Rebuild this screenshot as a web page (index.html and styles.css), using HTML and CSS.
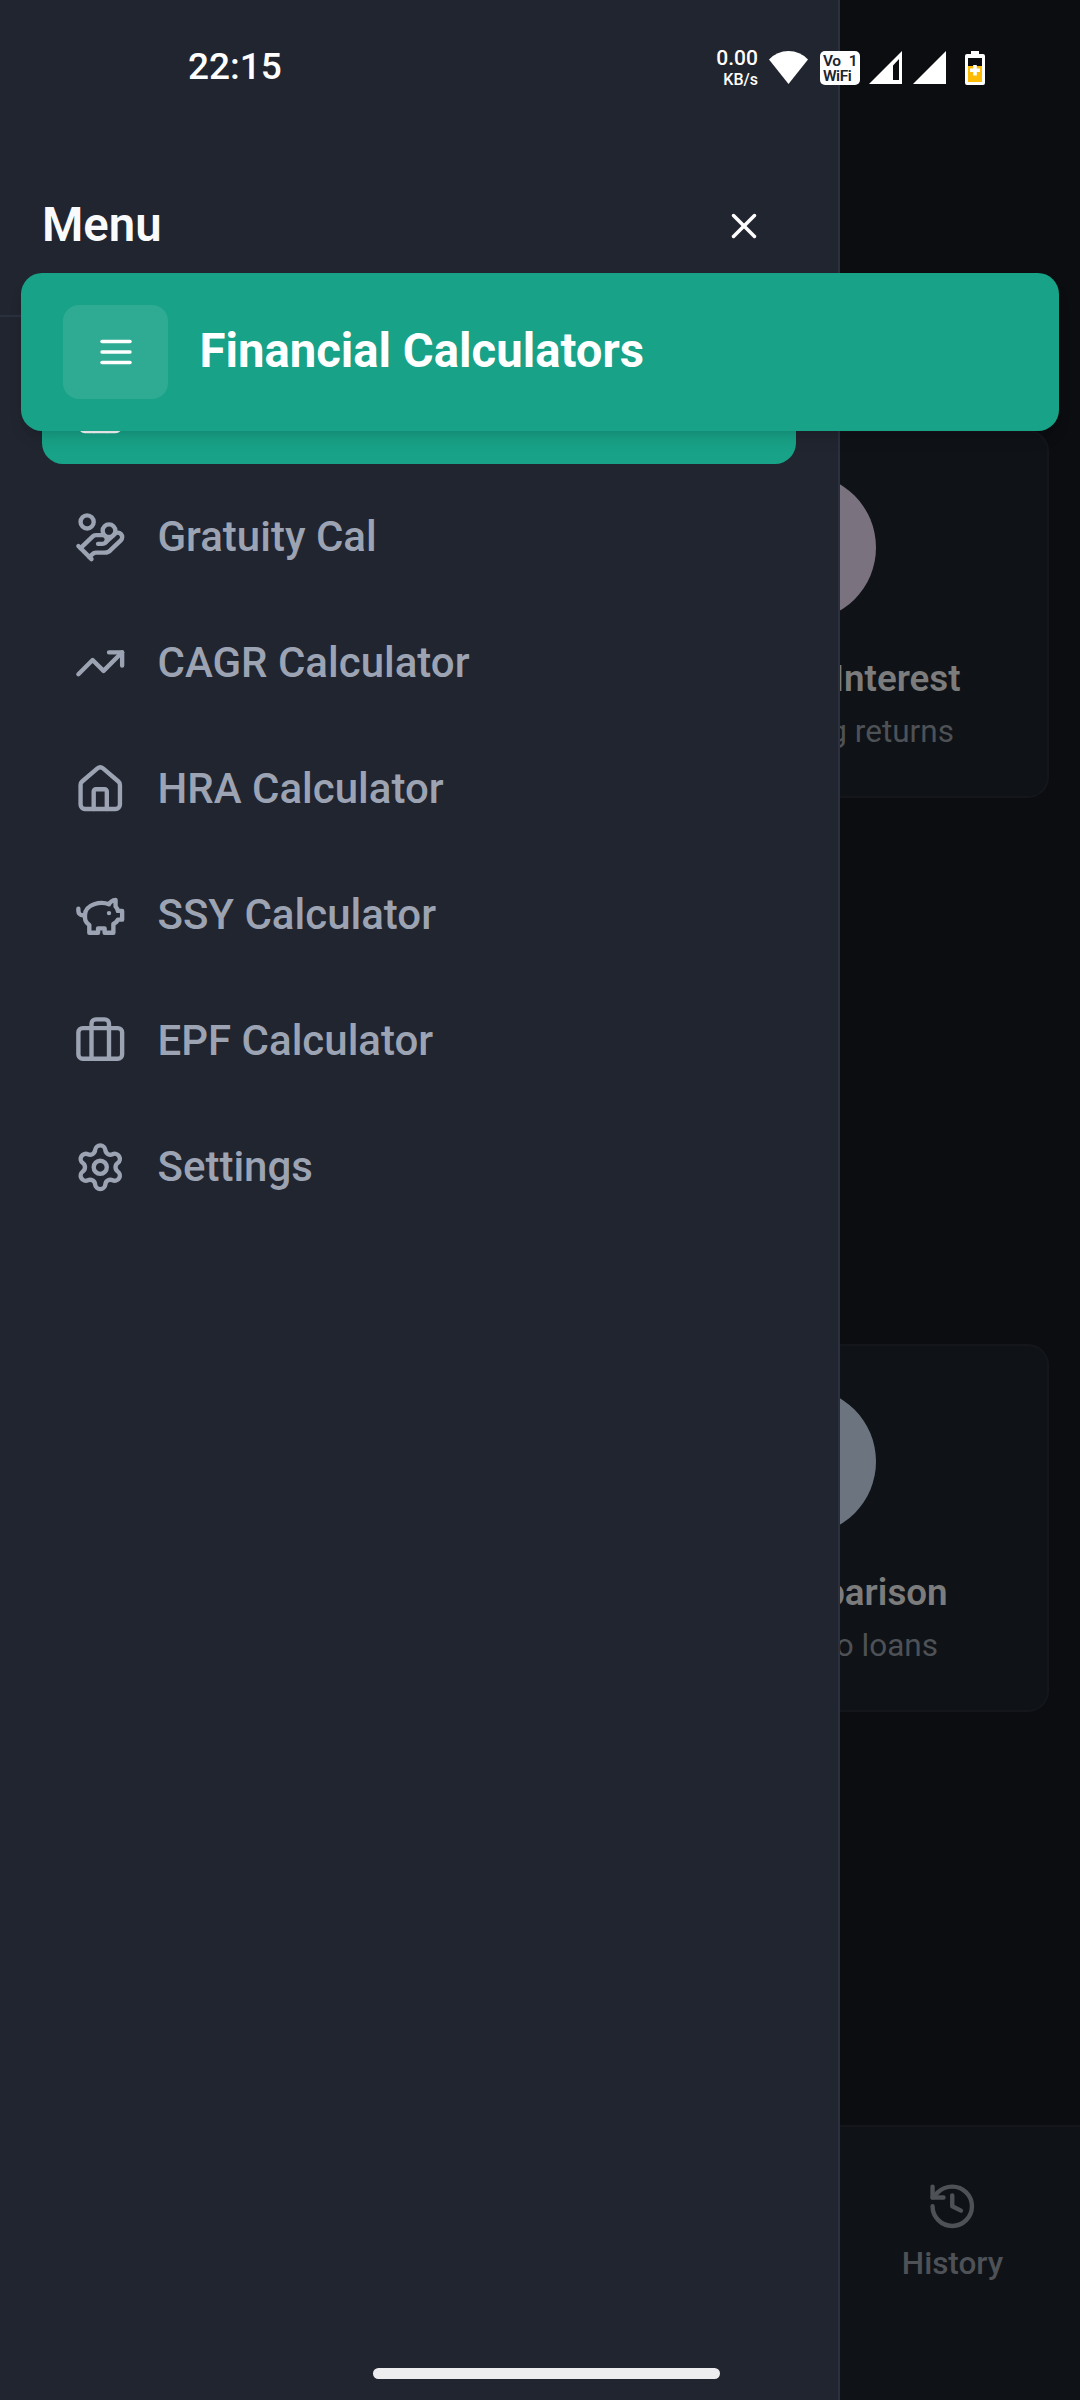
FILE: index.html
```html
<!DOCTYPE html>
<html lang="en">
<head>
<meta charset="UTF-8">
<title>Financial Calculators</title>
<meta name="viewport" content="width=device-width,initial-scale=1">
<link rel="stylesheet" href="styles.css">
</head>
<body>

<div id="app">
  <!-- Page behind the drawer -->
  <main class="cards">
    <div class="card">
      <div class="circle pink"></div>
      <h3>Compound Interest</h3>
      <p>Compounding returns</p>
    </div>
    <div class="card">
      <div class="circle blue"></div>
      <h3>Loan Comparison</h3>
      <p>Compare two loans</p>
    </div>
  </main>

  <footer class="tabs">
    <div class="tab">
      <svg class="icon" viewBox="0 0 24 24"><path d="M3 12a9 9 0 1 0 9-9 9.75 9.75 0 0 0-6.74 2.74L3 8"/><path d="M3 3v5h5"/><path d="M12 7v5l4 2"/></svg>
      <span>History</span>
    </div>
  </footer>

  <!-- Drawer -->
  <aside class="drawer">
    <div class="drawer-head">
      <h2>Menu</h2>
      <svg class="icon small" viewBox="0 0 24 24"><path d="M18 6 6 18"/><path d="m6 6 12 12"/></svg>
    </div>
    <nav>
      <div class="item active">
        <svg class="icon" viewBox="0 0 24 24"><path d="M15 21v-8a1 1 0 0 0-1-1h-4a1 1 0 0 0-1 1v8"/><path d="M3 10a2 2 0 0 1 .709-1.528l7-5.999a2 2 0 0 1 2.582 0l7 5.999A2 2 0 0 1 21 10v9a2 2 0 0 1-2 2H5a2 2 0 0 1-2-2z"/></svg>
      </div>
      <div class="item">
        <svg class="icon" viewBox="0 0 24 24"><path d="M11 15h2a2 2 0 1 0 0-4h-3c-.6 0-1.1.2-1.4.6L3 17"/><path d="m7 21 1.6-1.4c.3-.4.8-.6 1.4-.6h4c1.1 0 2.1-.4 2.8-1.2l4.6-4.4a2 2 0 0 0-2.75-2.91l-4.2 3.9"/><path d="m2 16 6 6"/><circle cx="16" cy="9" r="2.9"/><circle cx="6" cy="5" r="3"/></svg>
        <span>Gratuity Cal</span>
      </div>
      <div class="item">
        <svg class="icon" viewBox="0 0 24 24"><path d="M16 7h6v6"/><path d="m22 7-8.5 8.5-5-5L2 17"/></svg>
        <span>CAGR Calculator</span>
      </div>
      <div class="item">
        <svg class="icon" viewBox="0 0 24 24"><path d="M15 21v-8a1 1 0 0 0-1-1h-4a1 1 0 0 0-1 1v8"/><path d="M3 10a2 2 0 0 1 .709-1.528l7-5.999a2 2 0 0 1 2.582 0l7 5.999A2 2 0 0 1 21 10v9a2 2 0 0 1-2 2H5a2 2 0 0 1-2-2z"/></svg>
        <span>HRA Calculator</span>
      </div>
      <div class="item">
        <svg class="icon" viewBox="0 0 24 24"><path d="M19 5c-1.5 0-2.8 1.4-3 2-3.5-1.5-11-.3-11 5 0 1.8 0 3 2 4.5V20h4v-2h3v2h4v-4c1-.5 1.7-1 2-2h2v-4h-2c0-1-.5-1.5-1-2V5z"/><path d="M2 9v1c0 1.1.9 2 2 2h1"/><path d="M16 11h.01"/></svg>
        <span>SSY Calculator</span>
      </div>
      <div class="item">
        <svg class="icon" viewBox="0 0 24 24"><path d="M16 20V4a2 2 0 0 0-2-2h-4a2 2 0 0 0-2 2v16"/><rect x="2" y="6" width="20" height="14" rx="2"/></svg>
        <span>EPF Calculator</span>
      </div>
      <div class="item">
        <svg class="icon" viewBox="0 0 24 24"><path d="M9.671 4.136a2.34 2.34 0 0 1 4.659 0 2.34 2.34 0 0 0 3.319 1.915 2.34 2.34 0 0 1 2.33 4.033 2.34 2.34 0 0 0 0 3.831 2.34 2.34 0 0 1-2.33 4.033 2.34 2.34 0 0 0-3.319 1.915 2.34 2.34 0 0 1-4.659 0 2.34 2.34 0 0 0-3.32-1.915 2.34 2.34 0 0 1-2.33-4.033 2.34 2.34 0 0 0 0-3.831A2.34 2.34 0 0 1 6.35 6.051a2.34 2.34 0 0 0 3.319-1.915"/><circle cx="12" cy="12" r="3"/></svg>
        <span>Settings</span>
      </div>
    </nav>
  </aside>

  <!-- App header, floats over the drawer -->
  <header class="topbar">
    <div class="menu-btn">
      <svg class="icon small" viewBox="0 0 24 24"><path d="M4 6h16"/><path d="M4 12h16"/><path d="M4 18h16"/></svg>
    </div>
    <h1>Financial Calculators</h1>
  </header>

  <!-- Phone status bar -->
  <div class="status">
    <span class="clock">22:15</span>
    <div class="status-icons">
      <div class="speed"><b>0.00</b><small>KB/s</small></div>
      <svg class="wifi" width="39" height="33" viewBox="0 0 39 33"><path d="M0 8.500Q8 0 19.500 0T39 8.500L19.500 33z"/></svg>
      <div class="vowifi"><div><span>Vo</span><span>1</span></div><div>WiFi</div></div>
      <svg class="signal" width="33" height="33" viewBox="0 0 33 33"><path fill-rule="evenodd" d="M33 0v33H0zM30 8l-6 6.500V29h6z"/></svg>
      <svg class="signal two" width="33" height="33" viewBox="0 0 33 33"><path d="M33 0v33H0z"/></svg>
      <svg class="battery" width="20" height="34" viewBox="0 0 20 34"><path d="M6 0h8v3h4a2 2 0 0 1 2 2v27a2 2 0 0 1-2 2H2a2 2 0 0 1-2-2V5a2 2 0 0 1 2-2h4z"/><path fill="#0c0d11" d="M3 7h14v8H3z"/><path fill="#fdbb05" d="M3 15h14v16H3z"/><path d="M8.200 14h3.600v3.400H15V21h-3.200v3.400H8.200V21H5v-3.600h3.200z"/></svg>
    </div>
  </div>

  <div class="home-bar"></div>
</div>

</body>
</html>
```

FILE: styles.css
```css
:root{
  --bg:#0c0d11;
  --card:#0f1317;
  --card-line:#14161c;
  --drawer:#21252f;
  --line:#2a303e;
  --accent:#18a287;
  --muted:#9ca3b3;
  --radius:21px;
}
*{box-sizing:border-box;}
body{margin:0; font-family:Roboto,"Liberation Sans",sans-serif; background:var(--bg); color:#fff;}
h1,h2,h3,p{margin:0;}
#app{position:relative; width:1080px; height:2400px; overflow:hidden;}

.icon{
  width:52.5px; height:52.5px; flex:none; fill:none;
  stroke:currentColor; stroke-width:2; stroke-linecap:round; stroke-linejoin:round;
}
.icon.small{width:42px; height:42px;}

/* ---------- page behind ---------- */
.cards{
  display:flex; flex-direction:column; align-items:flex-end; gap:546px;
  padding:430px 31.5px 0 0;
}
.card{
  width:495px; height:368px; padding:42px 0 0 2px;
  background:var(--card); border:2px solid var(--card-line); border-radius:var(--radius);
  display:flex; flex-direction:column; align-items:center;
}
.circle{width:147px; height:147px; border-radius:50%;}
.pink{background:#7a727f;}
.blue{background:#6c747f;}
.card h3{margin-top:32px; padding-left:1px; font-size:36.75px; line-height:52px; font-weight:600; color:#7c7c7d; white-space:nowrap;}
.card p{margin-top:6px; font-size:31.5px; line-height:42px; color:#4e5156; white-space:nowrap;}

.tabs{
  position:absolute; left:0; right:0; bottom:0; height:275px;
  display:flex; justify-content:flex-end;
  background:var(--card); border-top:2px solid var(--card-line);
}
.tab{
  width:255px; padding-top:53px; color:#4e5156;
  display:flex; flex-direction:column; align-items:center; gap:10px;
  font-size:31.5px; line-height:42px; font-weight:500;
}

/* ---------- drawer ---------- */
.drawer{
  position:absolute; left:0; top:0; width:840px; height:2400px;
  background:var(--drawer); border-right:2px solid var(--line);
}
.drawer-head{
  height:317px; padding:137px 73px 0 42px;
  display:flex; align-items:center; justify-content:space-between;
  border-bottom:2px solid var(--line);
}
.drawer-head h2{padding-bottom:2px; font-size:47.25px; font-weight:600; color:#f9fafb;}
nav{display:flex; flex-direction:column; gap:21px; padding:42px;}
.item{
  height:105px; padding:0 31.5px; border-radius:var(--radius);
  display:flex; align-items:center; gap:31.5px;
  font-size:42px; font-weight:500; color:var(--muted);
}
.item span{padding-bottom:2px;}
.item.active{background:var(--accent); color:#fff;}

/* ---------- header ---------- */
.topbar{
  position:absolute; left:21px; top:273px; width:1038px; height:158px;
  display:flex; align-items:center; gap:31.5px; padding:0 42px;
  background:var(--accent); border-radius:var(--radius);
  box-shadow:0 10px 16px -3px rgba(0,0,0,.1), 0 5px 10px -5px rgba(0,0,0,.1);
}
.menu-btn{
  width:105px; height:94px; border-radius:16px; background:rgba(255,255,255,.1);
  display:flex; align-items:center; justify-content:center;
}
.topbar h1{padding-bottom:2px; font-size:47.25px; font-weight:700;}

/* ---------- system bars ---------- */
.status{
  position:absolute; left:0; top:0; width:1080px; height:135px;
  display:flex; justify-content:space-between; padding:0 95px 0 188px;
}
.clock{font-size:37px; line-height:44px; font-weight:500; padding-top:45px;}
.status-icons{display:flex; align-items:flex-start; padding-top:51px;}
.status-icons svg{fill:#fff;}
.speed{display:flex; flex-direction:column; align-items:flex-end; margin:-4px 11px 0 0;}
.speed b{font-size:21px; line-height:23px; font-weight:500;}
.speed small{font-size:16px; line-height:19px; font-weight:500;}
.vowifi{
  width:40px; height:34px; margin:0 9px 0 12px; padding:3px 3px 1px; border-radius:5px;
  background:#fff; color:#21252f; font-size:15.5px; line-height:15px; font-weight:600; letter-spacing:-.5px;
}
.vowifi div{display:flex; justify-content:space-between;}
.signal.two{margin:0 19px 0 11px;}
.home-bar{
  position:absolute; left:373px; top:2368px; width:347px; height:11px;
  border-radius:6px; background:#ededef;
}
```
